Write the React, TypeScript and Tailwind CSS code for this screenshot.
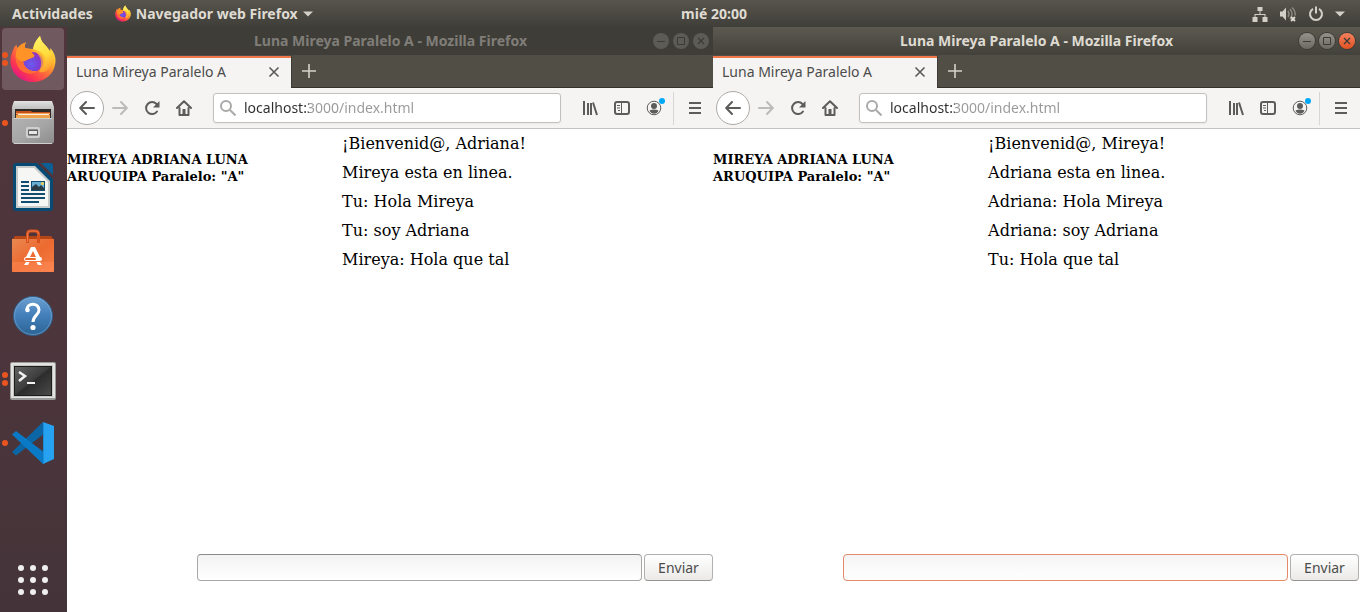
import React from 'react';

function FirefoxLogo({ id, className }: { id: string; className: string }) {
  return (
    <svg viewBox="0 0 46 48" className={className} aria-hidden="true">
      <defs>
        <linearGradient id={id + 'body'} x1="0.85" y1="0.1" x2="0.2" y2="0.95">
          <stop offset="0" stopColor="#fff44f" />
          <stop offset="0.3" stopColor="#ffb62c" />
          <stop offset="0.55" stopColor="#ff7139" />
          <stop offset="0.8" stopColor="#fb3650" />
          <stop offset="1" stopColor="#e31587" />
        </linearGradient>
        <linearGradient id={id + 'flame'} x1="0.4" y1="0" x2="0.6" y2="1">
          <stop offset="0" stopColor="#fff36a" />
          <stop offset="0.55" stopColor="#ffdc3c" />
          <stop offset="1" stopColor="#ff9a2e" />
        </linearGradient>
        <radialGradient id={id + 'globe'} cx="0.4" cy="0.6" r="0.65">
          <stop offset="0" stopColor="#6a5cf0" />
          <stop offset="0.6" stopColor="#7a3fd6" />
          <stop offset="1" stopColor="#a52bb8" />
        </radialGradient>
      </defs>
      <path
        d="M2 18C3 14 5 11 6.500 9.500C6.500 11 7 12 7.500 13C10 10 13 8 16 7.500C14.500 10 14.500 12 15.500 13.500L23 14C24 8 27 4 30 1C30.500 5 33 8 36 11C38 13 39.500 15 40 16C40.500 15 40.500 14 40 12.500C44 17 46 22 45.500 27C44.500 39 35 47 23 47C10 47 0.500 37.500 0.500 26C0.500 23 1 20 2 18Z"
        fill={'url(#' + id + 'body)'}
      />
      <path
        d="M23 14C24 8 27 4 30 1C30.500 5 33 8 36 11C42 18 43 25 40 32C37 37 33 38 29 37C36 32 36 23 31 18C29 16 26 15 23 14Z"
        fill={'url(#' + id + 'flame)'}
      />
      <circle cx="23" cy="27" r="10" fill={'url(#' + id + 'globe)'} />
      <path
        d="M7.500 13C10 10 13 8 16 7.500C14.500 10 14.500 12 15.500 13.500C18 13 20 14 21.500 16C22 18 24 20 24.500 20.500C24 23 21.500 23 19 24C16.500 25 15 27 13 26.500C14 33 20 37 27 36C22 40 12 39 8 31C5 25 5 18 7.500 13Z"
        fill="#ff9328"
      />
      <path
        d="M13 26.500C14 33 20 37 27 36C22 40 12 39 8 31C6.500 28 6 25 6 22C8 25 10.500 26.500 13 26.500Z"
        fill="#ff6b35"
      />
      <path
        d="M24 16C31 15 36 20 36 26C36 31 33 35 29 37C31 32 32 27 30 23C29 20 27 18 24 16Z"
        fill="#ffbd30"
        opacity="0.6"
      />
    </svg>
  );
}

function FilesIcon() {
  return (
    <svg viewBox="0 0 46 46" className="size-[46px]">
      <defs>
        <linearGradient id="cabinet" x1="0" y1="0" x2="0" y2="1">
          <stop offset="0" stopColor="#e2e2e2" />
          <stop offset="0.35" stopColor="#a5a5a5" />
          <stop offset="1" stopColor="#8f8f8f" />
        </linearGradient>
        <linearGradient id="drawer" x1="0" y1="0" x2="1" y2="1">
          <stop offset="0" stopColor="#b2b2b2" />
          <stop offset="0.5" stopColor="#a6a6a6" />
          <stop offset="1" stopColor="#8b8b8b" />
        </linearGradient>
      </defs>
      <path d="M4 1h38l2 6v34H2V7z" fill="url(#cabinet)" />
      <path d="M5 9h36v10H5z" fill="#2e2a28" />
      <path d="M6 11h15l1 1h18v3H6z" fill="#c4501c" />
      <path d="M6 13h34v1H6z" fill="#f5a45c" />
      <path d="M8 14h31v1H8z" fill="#f9efe6" />
      <path d="M6 15h34v4H6z" fill="#f0a24a" />
      <path d="M2 18h42v24l-2 2H4l-2-2z" fill="url(#drawer)" />
      <path d="M4 43h38v1H4zM4 18h38v1H4z" fill="#cfcfcf" />
      <rect x="16" y="27" width="14" height="11" rx="2" fill="#cfcfcf" />
      <rect x="18" y="29" width="10" height="7" rx="1" fill="#8a8a8a" />
      <rect x="18.500" y="30.500" width="9" height="4" fill="#e7e7e7" stroke="#606060" />
    </svg>
  );
}

function WriterIcon() {
  return (
    <svg viewBox="0 0 46 50" className="h-[50px] w-[46px]">
      <path d="M6 1h21l16 16v29a3 3 0 0 1-3 3H6a3 3 0 0 1-3-3V4a3 3 0 0 1 3-3z" fill="#074a74" />
      <path d="M31 1h9a3 3 0 0 1 3 3v9z" fill="#0b5f94" />
      <path d="M6 4h19l15 15v27H6z" fill="#c8cbcc" />
      <path d="M8 6h16l14 14v24H8z" fill="#f6f6f5" />
      <g fill="#104d71">
        <path d="M11 19h8v2h-8zM11 23h8v2h-8zM11 27h8v2h-8zM11 31h24v2H11zM11 35h24v2H11zM11 39h18v2H11z" />
        <path d="M21 19h14v10H21z" />
      </g>
      <path d="M22 20h12v8H22z" fill="#69aed5" />
      <path d="M22 28v-3l4-3 3 3 2-2 3 3v2z" fill="#293c44" />
      <circle cx="32.500" cy="21.500" r="1.500" fill="#f5d04b" />
    </svg>
  );
}

function SoftwareIcon() {
  return (
    <svg viewBox="0 0 46 46" className="size-[46px]">
      <defs>
        <linearGradient id="bag" x1="0" y1="0" x2="1" y2="1">
          <stop offset="0" stopColor="#e98852" />
          <stop offset="0.5" stopColor="#ed6a2f" />
          <stop offset="1" stopColor="#f57f4a" />
        </linearGradient>
      </defs>
      <path d="M5 8h36l3 4H2z" fill="#b34516" />
      <path d="M2 11h42v32a1 1 0 0 1-1 1H3a1 1 0 0 1-1-1z" fill="url(#bag)" />
      <path d="M2 34h42v9a1 1 0 0 1-1 1H3a1 1 0 0 1-1-1z" fill="#ff8a55" opacity="0.5" />
      <path d="M17.500 15V6q0-3 3-3h5q3 0 3 3v9" fill="none" stroke="#d5511d" strokeWidth="3" />
      <path d="M17.500 14V6q0-3 3-3h5q3 0 3 3" fill="none" stroke="#f0794a" strokeWidth="1" />
      <path d="M16 29L21 19h4l5 10h-4l-3-6-3 6zM14 37l2-3h3.500l-1.500 3zM32 37l-2-3h-3.500l1.500 3z" fill="#fff" />
      <rect x="14" y="29" width="18" height="4" rx="2" fill="#fff" />
      <rect x="15" y="30" width="11" height="2" rx="1" fill="#ed6a2f" />
    </svg>
  );
}

function HelpIcon() {
  return (
    <svg viewBox="0 0 46 46" className="size-[46px]">
      <defs>
        <linearGradient id="help" x1="0" y1="0" x2="0" y2="1">
          <stop offset="0" stopColor="#6ba0d1" />
          <stop offset="0.5" stopColor="#427eb9" />
          <stop offset="1" stopColor="#2b6494" />
        </linearGradient>
      </defs>
      <circle cx="23" cy="24" r="19.500" fill="url(#help)" stroke="#2f608d" />
      <circle cx="23" cy="24" r="18.500" fill="none" stroke="#8cb4d9" opacity="0.5" />
      <path
        d="M17 18C16.500 10.500 29 10 29 18C29 23 23 23.500 23 30"
        fill="none"
        stroke="#fff"
        strokeWidth="3"
      />
      <circle cx="17.500" cy="18" r="2.300" fill="#fff" />
      <circle cx="23" cy="35.500" r="2.600" fill="#fff" />
    </svg>
  );
}

function TerminalIcon() {
  return (
    <svg viewBox="0 -4 46 42" className="h-[42px] w-[46px]">
      <defs>
        <linearGradient id="screen" x1="0" y1="0" x2="1" y2="1">
          <stop offset="0" stopColor="#626262" />
          <stop offset="0.48" stopColor="#3d3d3d" />
          <stop offset="0.52" stopColor="#2c2c2c" />
          <stop offset="1" stopColor="#4a4a4a" />
        </linearGradient>
      </defs>
      <rect x="0" y="0" width="46" height="38" rx="2" fill="#9a9a9a" />
      <rect x="1" y="1" width="44" height="35" rx="1" fill="#e3e3e2" />
      <rect x="3" y="3" width="40" height="32" fill="#c6c6c5" />
      <rect x="4" y="4" width="38" height="30" fill="#1d1d1d" />
      <rect x="5" y="5" width="36" height="28" fill="url(#screen)" />
      <path d="M9 10l6 4-6 5" fill="none" stroke="#f2f2f2" strokeWidth="2.500" />
      <path d="M17 20h8v2h-8z" fill="#f2f2f2" />
    </svg>
  );
}

function CodeIcon() {
  return (
    <svg viewBox="0 0 46 46" className="size-[46px]">
      <path d="M2 32L33 2l2 11L6 35.500z" fill="#0c65a5" />
      <path d="M2 14.500L6 11l29 22v10l-2 1z" fill="#0a7ac7" />
      <path d="M33 2l11 4v33l-11 5z" fill="#27a2f0" />
      <path d="M33 2v42l1-1V3z" fill="#1c8bd8" />
    </svg>
  );
}

interface DockItem {
  name: string;
  icon: React.ReactNode;
  windows: number;
  active?: boolean;
}

const dockItems: DockItem[] = [
  { name: 'Firefox', icon: <FirefoxLogo id="dock" className="h-[48px] w-[46px]" />, windows: 2, active: true },
  { name: 'Archivos', icon: <FilesIcon />, windows: 1 },
  { name: 'Writer', icon: <WriterIcon />, windows: 0 },
  { name: 'Software', icon: <SoftwareIcon />, windows: 0 },
  { name: 'Ayuda', icon: <HelpIcon />, windows: 0 },
  { name: 'Terminal', icon: <TerminalIcon />, windows: 2 },
  { name: 'Code', icon: <CodeIcon />, windows: 1 },
];

function Dock() {
  return (
    <nav className="flex w-[67px] shrink-0 flex-col justify-between bg-linear-to-b from-[#50353c] via-[#4d353c] to-[#443439]">
      <ul>
        {dockItems.map((item) => (
          <li key={item.name} className="relative flex h-16 items-center pl-[2px]">
            <button
              aria-label={item.name}
              className={
                item.active
                  ? 'flex size-[62px] items-center justify-center rounded-sm bg-[#715a5f]'
                  : 'flex size-[62px] items-center justify-center rounded-sm'
              }
            >
              {item.icon}
            </button>
            <span className="absolute inset-y-0 left-[2px] flex flex-col justify-center gap-[2px]">
              {Array.from({ length: item.windows }, (_, n) => (
                <span key={n} className="size-[6px] rounded-full bg-[#e95420]" />
              ))}
            </span>
          </li>
        ))}
      </ul>
      <button aria-label="Mostrar aplicaciones" className="flex h-16 w-[66px] items-center justify-center">
        <span className="grid grid-cols-3 gap-[6px]">
          {Array.from({ length: 9 }, (_, n) => (
            <span key={n} className="size-[6px] rounded-full bg-[#f0eeee]" />
          ))}
        </span>
      </button>
    </nav>
  );
}

function TopBar() {
  return (
    <header className="grid h-[27px] shrink-0 grid-cols-[1fr_auto_1fr] items-center bg-linear-to-b from-[#57554c] to-[#3f3e39] text-sm font-bold text-[#dfdbd2]">
      <div className="flex items-center gap-[22px] pl-3">
        <button>Actividades</button>
        <button className="flex items-center gap-[5px]">
          <FirefoxLogo id="bar" className="h-[17px] w-4" />
          Navegador web Firefox
          <svg viewBox="0 0 10 6" className="h-[6px] w-[10px]" fill="#d2cfc7">
            <path d="M0 0.500h10L5 5.500z" />
          </svg>
        </button>
      </div>
      <time className="pl-17">mié 20:00</time>
      <div className="flex items-center justify-end gap-[11px] pr-[15px]">
        <svg viewBox="0 0 16 16" className="size-4" fill="#d2cfc7">
          <path d="M5.500 1h5v4h-5zM0.500 11h5v5h-5zM10.500 11h5v5h-5zM7.500 5h1v3h5v3h-1V9h-9v2h-1V8h5z" />
        </svg>
        <svg viewBox="0 0 18 16" className="h-4 w-[18px]" fill="none">
          <path d="M1 5.500h2.500L7 1.500v13L3.500 10.500H1z" fill="#d2cfc7" />
          <path d="M9 5q2 3 0 6M11 3q4 5 0 10M13 1.500q4 4 3 8" stroke="#89877f" strokeWidth="1.500" />
          <path d="M12 11l4 4m0-4l-4 4" stroke="#dfdbd2" strokeWidth="1.800" />
        </svg>
        <svg viewBox="0 0 16 16" className="size-4" fill="none" stroke="#d2cfc7" strokeWidth="2">
          <path d="M5 2.800a6 6 0 1 0 6 0M8 0.500v7" />
        </svg>
        <svg viewBox="0 0 10 6" className="h-[6px] w-[10px]" fill="#d2cfc7">
          <path d="M0 0.500h10L5 5.500z" />
        </svg>
      </div>
    </header>
  );
}

function TitleBar({ title, focused }: { title: string; focused: boolean }) {
  const round = 'flex size-4 items-center justify-center rounded-full ';
  const plain = focused
    ? round + 'bg-linear-to-b from-[#94928a] to-[#6b6962] ring-1 ring-[#3c3b37]'
    : round + 'bg-[#5d5b55]';
  const close = focused
    ? round + 'bg-linear-to-b from-[#f4815c] to-[#e2501f] ring-1 ring-[#3c3b37]'
    : plain;
  return (
    <div
      className={
        focused
          ? 'grid h-[28px] grid-cols-[1fr_auto_1fr] items-center bg-linear-to-b from-[#5c5a50] to-[#42413b] text-[#dfdbd2]'
          : 'grid h-[28px] grid-cols-[1fr_auto_1fr] items-center bg-[#3e3d38] text-[#807d78]'
      }
    >
      <h1 className="col-start-2 text-sm font-bold">{title}</h1>
      <div className="flex justify-end gap-1 pr-[5px]">
        <button aria-label="Minimizar" className={plain}>
          <svg viewBox="0 0 16 16" className="size-4" stroke="#3c3b37">
            <path d="M4 8.500h8" />
          </svg>
        </button>
        <button aria-label="Maximizar" className={plain}>
          <svg viewBox="0 0 16 16" className="size-4" fill="none" stroke="#3c3b37">
            <path d="M4.500 4.500h7v7h-7z" />
          </svg>
        </button>
        <button aria-label="Cerrar" className={close}>
          <svg viewBox="0 0 16 16" className="size-4" stroke="#3c3b37" strokeWidth="1.300">
            <path d="M5 5l6 6m0-6l-6 6" />
          </svg>
        </button>
      </div>
    </div>
  );
}

function TabStrip({ title }: { title: string }) {
  return (
    <div className="flex h-[33px] items-stretch border-b border-[#33322d] bg-[#504e45]">
      <div className="mt-px -mb-px flex w-[224px] items-center justify-between border-t-2 border-[#f0774a] bg-[#f5f4f2] pr-[11px] pb-[3px] pl-[9px] text-sm text-[#4c4c4c]">
        <span>{title}</span>
        <button aria-label="Cerrar pestaña">
          <svg viewBox="0 0 12 12" className="size-3" stroke="#5a5a58" strokeWidth="1.600">
            <path d="M1.500 1.500l9 9m0-9l-9 9" />
          </svg>
        </button>
      </div>
      <button aria-label="Nueva pestaña" className="flex w-[34px] items-center justify-center border-l border-[#3c3b36]">
        <svg viewBox="0 0 14 14" className="size-[14px]" stroke="#d5d2ca" strokeWidth="1.600">
          <path d="M7 0v14M0 7h14" />
        </svg>
      </button>
    </div>
  );
}

function ToolButton({ label, children }: { label: string; children: React.ReactNode }) {
  return (
    <button aria-label={label} className="flex size-8 shrink-0 items-center justify-center">
      {children}
    </button>
  );
}

function Toolbar() {
  const line = 'size-4 fill-none stroke-[#5c5c5a] stroke-2';
  return (
    <div className="flex h-[41px] items-center border-b border-[#c4c2c0] bg-[#f5f4f2] pr-[3px] pl-[3px]">
      <button
        aria-label="Atrás"
        className="flex size-[34px] shrink-0 items-center justify-center rounded-full border border-[#adabaa] bg-white"
      >
        <svg viewBox="0 0 16 16" className={line} strokeLinecap="round" strokeLinejoin="round">
          <path d="M15 8H1.500M7 2L1.200 8 7 14" />
        </svg>
      </button>
      <ToolButton label="Adelante">
        <svg
          viewBox="0 0 16 16"
          className="size-4 fill-none stroke-[#bcbbb9] stroke-2"
          strokeLinecap="round"
          strokeLinejoin="round"
        >
          <path d="M1 8h13.500M9 2l5.800 6L9 14" />
        </svg>
      </ToolButton>
      <ToolButton label="Recargar">
        <svg viewBox="0 0 16 16" className={line} strokeLinecap="round">
          <path d="M13 11.500A6 6 0 1 1 12.500 4" />
          <path d="M15.500 1v6.500H9z" fill="#5c5c5a" stroke="none" />
        </svg>
      </ToolButton>
      <ToolButton label="Inicio">
        <svg viewBox="0 0 16 16" className={line} strokeLinecap="round" strokeLinejoin="round">
          <path d="M1 8l7-6.800L15 8M3.500 8v7h9V8" />
          <path d="M6.500 9h3v6h-3z" fill="#5c5c5a" stroke="none" />
        </svg>
      </ToolButton>
      <div className="mx-[13px] flex h-[30px] min-w-0 flex-1 items-center rounded-[3px] border border-[#c3c1bf] bg-white pl-[6px] shadow-xs">
        <svg viewBox="0 0 16 16" className="mr-2 size-4 shrink-0 fill-none stroke-[#aaa9a8] stroke-2" aria-hidden="true">
          <path d="M10 10l5.500 5.500" />
          <circle cx="6" cy="6" r="5" />
        </svg>
        <input
          type="text"
          aria-label="Dirección"
          defaultValue="localhost:3000/index.html"
          className="min-w-0 flex-1 bg-[linear-gradient(to_right,#2e2e2e_65px,#9a9998_65px)] bg-clip-text text-sm text-transparent caret-black outline-none"
        />
      </div>
      <ToolButton label="Catálogo">
        <svg viewBox="0 0 16 16" className={line}>
          <path d="M2 1v14M6 3v12M9 3v12M11 2.500l4 12.500" />
        </svg>
      </ToolButton>
      <ToolButton label="Barra lateral">
        <svg viewBox="0 0 16 16" className={line}>
          <rect x="1" y="2" width="14" height="12" rx="2" />
          <path d="M7.500 2v12M3 5.500h3M3 8h3M4 10.500h2" strokeWidth="1" />
        </svg>
      </ToolButton>
      <button aria-label="Cuenta" className="relative flex size-8 shrink-0 items-center justify-center">
        <svg viewBox="0 0 16 16" className="size-4" fill="#5c5c5a">
          <circle cx="8" cy="8" r="6.800" fill="none" stroke="#5c5c5a" />
          <circle cx="8" cy="6" r="3" />
          <path d="M3.500 10.500q4.500-2 9 0q-1.500 3.200-4.500 3.200t-4.500-3.200z" />
        </svg>
        <span className="absolute top-[6px] right-[5px] size-[6px] rounded-full bg-[#00a8f8]" />
      </button>
      <span className="mr-[5px] ml-[3px] h-[33px] w-px shrink-0 bg-[#d8d6d4]" />
      <ToolButton label="Menú">
        <svg viewBox="0 0 16 16" className={line}>
          <path d="M2 3h12M2 8h12M2 13h12" />
        </svg>
      </ToolButton>
    </div>
  );
}

interface ChatProps {
  messages: string[];
  focused: boolean;
}

function Chat({ messages, focused }: ChatProps) {
  return (
    <main className="flex flex-1 flex-col justify-between bg-white pb-[31px] text-black">
      <div className="flex font-['DejaVu_Serif',serif]">
        <h2 className="mt-[22px] w-[30%] text-[13px] leading-[17px] font-bold">
          MIREYA ADRIANA LUNA ARUQUIPA Paralelo: "A"
        </h2>
        <ul className="ml-[81px] text-base leading-[19px]">
          {messages.map((message) => (
            <li key={message} className="py-[5px]">
              {message}
            </li>
          ))}
        </ul>
      </div>
      <form className="flex gap-[2px] pr-px pl-[130px]" onSubmit={(event) => event.preventDefault()}>
        <input
          type="text"
          aria-label="Mensaje"
          className={
            focused
              ? 'h-[27px] min-w-0 flex-1 rounded-sm border border-[#e58a68] bg-linear-to-b from-[#f5f5f5] to-white px-2 text-sm outline-none'
              : 'h-[27px] min-w-0 flex-1 rounded-sm border border-[#aaa8a6] border-t-[#8c8a88] bg-linear-to-b from-[#f3f3f3] to-white px-2 text-sm outline-none'
          }
        />
        <button className="h-[27px] w-[69px] rounded-sm border border-[#b3b1af] border-b-[#969492] bg-linear-to-b from-white to-[#ebeae8] text-sm text-[#4c4c4c]">
          Enviar
        </button>
      </form>
    </main>
  );
}

function BrowserWindow(props: ChatProps) {
  const title = 'Luna Mireya Paralelo A';
  return (
    <section className="-mr-px flex min-w-0 flex-1 flex-col last:mr-0">
      <TitleBar title={title + ' - Mozilla Firefox'} focused={props.focused} />
      <TabStrip title={title} />
      <Toolbar />
      <Chat {...props} />
    </section>
  );
}

export default function App() {
  return (
    <div className="flex min-h-screen flex-col font-['Noto_Sans',sans-serif]">
      <TopBar />
      <div className="flex flex-1">
        <Dock />
        <BrowserWindow
          focused={false}
          messages={[
            '¡Bienvenid@, Adriana!',
            'Mireya esta en linea.',
            'Tu: Hola Mireya',
            'Tu: soy Adriana',
            'Mireya: Hola que tal',
          ]}
        />
        <BrowserWindow
          focused
          messages={[
            '¡Bienvenid@, Mireya!',
            'Adriana esta en linea.',
            'Adriana: Hola Mireya',
            'Adriana: soy Adriana',
            'Tu: Hola que tal',
          ]}
        />
      </div>
    </div>
  );
}
